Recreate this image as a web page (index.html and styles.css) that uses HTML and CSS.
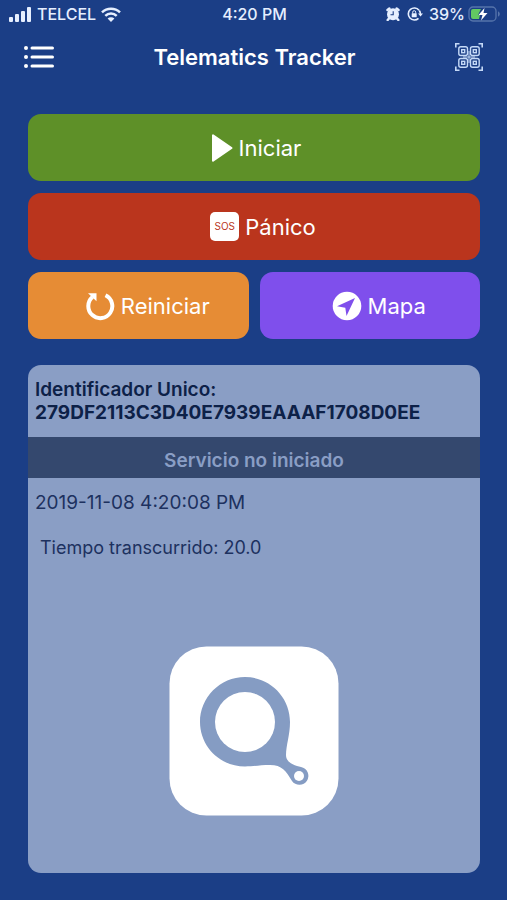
FILE: index.html
```html
<!DOCTYPE html>
<html lang="es">
<head>
<meta charset="utf-8">
<meta name="viewport" content="width=device-width, initial-scale=1">
<title>Telematics Tracker</title>
<link rel="stylesheet" href="styles.css">
</head>
<body>
<div class="status-bar">
  <div class="status-group">
    <svg viewBox="0 0 24 16" width="24" height="16" fill="currentColor" aria-hidden="true">
      <rect x="1" y="11" width="4" height="5" rx="1"/><rect x="7" y="8" width="4" height="8" rx="1"/><rect x="13" y="5" width="4" height="11" rx="1"/><rect x="19" y="1" width="4" height="15" rx="1"/>
    </svg>
    <span>TELCEL</span>
    <svg viewBox="0 0 20 15" width="20" height="15" aria-hidden="true">
      <path d="M1 5.4a13 13 0 0 1 18 0M4.300 8.800a8.200 8.200 0 0 1 11.400 0" fill="none" stroke="currentColor" stroke-width="2.500"/>
      <path d="M10 15 6.600 11.600a4.800 4.800 0 0 1 6.800 0z" fill="currentColor"/>
    </svg>
  </div>
  <span class="clock">4:20 PM</span>
  <div class="status-group status-right">
    <svg viewBox="0 0 14 14" width="14" height="14" aria-hidden="true">
      <circle cx="7" cy="7.300" r="6" fill="currentColor"/>
      <path d="M1.500 3 3.400 1.500M12.500 3 10.600 1.500M3 11.500 1.700 13M11 11.500l1.300 1.500" stroke="currentColor" stroke-width="2.500" stroke-linecap="round"/>
      <path d="M7.200 4.300v3.500H4.500" fill="none" stroke="#1b3e86" stroke-width="1.100"/>
    </svg>
    <svg class="lock" viewBox="0 0 16 14" width="16" height="14" aria-hidden="true">
      <path d="M12 3.200A6 6 0 1 0 11.500 11.300M12.300 3.500A6 6 0 0 1 13.400 7" fill="none" stroke="currentColor" stroke-width="1.600"/>
      <path d="M11 6.500h5l-2.500 3z" fill="currentColor"/>
      <rect x="4.700" y="6.300" width="5" height="4" rx=".5" fill="currentColor"/>
      <path d="M5.700 6.500V5.200a1.500 1.500 0 0 1 3 0v1.300" fill="none" stroke="currentColor"/>
    </svg>
    <span>39%</span>
    <svg class="battery" viewBox="0 0 33 16" width="33" height="16" aria-hidden="true">
      <rect x="1" y="1" width="27" height="14" rx="4" fill="none" stroke="#5674ab" stroke-width="1.300"/>
      <path d="M30 5.500c2.400.6 2.400 4.400 0 5z" fill="#5674ab"/>
      <path d="M5 3h8l-3 6h2l-1 4H5a2 2 0 0 1-2-2V5a2 2 0 0 1 2-2z" fill="#62c962"/>
      <path d="M16.500 2 10.500 9h4l-1.500 5.500 6.500-7.500h-4z" fill="#fff"/>
    </svg>
  </div>
</div>

<header class="nav">
  <button class="icon-button" type="button" aria-label="Menú">
    <svg viewBox="0 0 30 24" width="30" height="24" aria-hidden="true">
      <g fill="currentColor"><circle cx="2" cy="3" r="2"/><circle cx="2" cy="12" r="2"/><circle cx="2" cy="21" r="2"/></g>
      <path d="M8 3h20.500M8 12h20.500M8 21h20.500" stroke="currentColor" stroke-width="3" stroke-linecap="round"/>
    </svg>
  </button>
  <h1>Telematics Tracker</h1>
  <button class="icon-button" type="button" aria-label="Código QR">
    <svg viewBox="0 0 28 28" width="28" height="28" fill="none" stroke="#c5d9f7" aria-hidden="true">
      <path d="M.8 4.500V.8H4.500M23.500 .8h3.700V4.500M27.200 23.500v3.700H23.500M4.500 27.200H.8V23.500" stroke-width="1.600"/>
      <g stroke-width="1.400">
        <rect x="3.800" y="3.800" width="8.700" height="8.700" rx="2"/><rect x="15.500" y="3.800" width="8.700" height="8.700" rx="2"/>
        <rect x="3.800" y="15.500" width="8.700" height="8.700" rx="2"/><rect x="15.500" y="15.500" width="8.700" height="8.700" rx="2"/>
        <rect x="6.700" y="6.700" width="3" height="3"/><rect x="18.300" y="6.700" width="3" height="3"/>
        <rect x="6.700" y="18.300" width="3" height="3"/><rect x="18.300" y="18.300" width="3" height="3"/>
        <path d="M14 8v12M8 14h12" stroke-width="1"/>
      </g>
    </svg>
  </button>
</header>

<main>
  <div class="actions">
    <button class="action start" type="button">
      <svg viewBox="0 0 22 30" width="22" height="30" aria-hidden="true"><path d="M2 2.200v25.600L20.500 15z" fill="currentColor" stroke="currentColor" stroke-width="2" stroke-linejoin="round"/></svg>
      <span>Iniciar</span>
    </button>
    <button class="action panic" type="button">
      <span class="sos">SOS</span>
      <span>Pánico</span>
    </button>
    <button class="action restart" type="button">
      <svg viewBox="0 0 30 30" width="30" height="30" aria-hidden="true">
        <path d="M20.500 4.300A12 12 0 1 1 7.500 6" fill="none" stroke="currentColor" stroke-width="4"/>
        <path d="M3 2.300h8.500v8z" fill="currentColor"/>
      </svg>
      <span>Reiniciar</span>
    </button>
    <button class="action map" type="button">
      <svg viewBox="0 0 30 30" width="30" height="30" aria-hidden="true">
        <circle cx="15" cy="15" r="14.300" fill="currentColor"/>
        <path d="M23 7 5 15.200l8.300 1.500L14.500 25z" fill="#7f4fec"/>
      </svg>
      <span>Mapa</span>
    </button>
  </div>

  <section class="card">
    <div class="identifier">
      <h2>Identificador Unico:</h2>
      <p>279DF2113C3D40E7939EAAAF1708D0EE</p>
    </div>
    <p class="service">Servicio no iniciado</p>
    <p class="date">2019-11-08 4:20:08 PM</p>
    <p class="elapsed">Tiempo transcurrido: 20.0</p>
    <svg class="logo" viewBox="0 0 170 170" width="170" height="170" aria-hidden="true">
      <rect x=".5" y=".5" width="169" height="169" rx="37" fill="#fff"/>
      <path d="M76 31c25 0 45 20 45 45 0 13-4 23-4 33 0 6 5 9 11 11l4 1a9 9 0 1 1-9 14c-6-10-10-16-22-16-10 0-16 1.500-25 1.500-25 0-45-20-45-44.500s20-45 45-45z" fill="#859cc3"/>
      <circle cx="76" cy="76" r="30" fill="#fff"/>
      <circle cx="130" cy="130" r="5" fill="#fff"/>
    </svg>
  </section>
</main>
</body>
</html>
```
FILE: styles.css
```css
* {
  box-sizing: border-box;
}

body {
  margin: 0;
  min-height: 100vh;
  display: flex;
  flex-direction: column;
  background: #1b3e86;
  color: #fff;
  font-family: Inter, "Liberation Sans", sans-serif;
}

h1,
h2,
p {
  margin: 0;
}

button {
  border: 0;
  padding: 0;
  background: none;
  color: inherit;
  font: inherit;
}

svg {
  display: block;
  flex: none;
}

.status-bar {
  display: grid;
  grid-template-columns: 1fr auto 1fr;
  align-items: center;
  height: 28px;
  padding: 0 6px 0 8px;
  color: #e6efff;
  font-size: 16px;
  font-weight: 500;
}

.status-group {
  display: flex;
  align-items: center;
  gap: 5px;
}

.status-right {
  justify-content: flex-end;
}

.lock {
  margin: 0 1px 0 2px;
}

.battery {
  margin-left: -2px;
}

.nav {
  display: flex;
  align-items: center;
  justify-content: space-between;
  height: 58px;
  padding: 0 24px;
}

.nav h1 {
  font-size: 22px;
  font-weight: 600;
}

main {
  flex: 1;
  display: flex;
  flex-direction: column;
  gap: 26px;
  padding: 28px 27px 27px 28px;
}

.actions {
  display: grid;
  grid-template-columns: 1fr 1fr;
  gap: 12px 11px;
}

.action {
  display: flex;
  align-items: center;
  justify-content: center;
  gap: 6px;
  height: 67px;
  border-radius: 13px;
  font-size: 22px;
  font-weight: 400;
}

.start {
  grid-column: 1 / -1;
  padding-left: 4px;
  background: #5e9028;
}

.panic {
  grid-column: 1 / -1;
  padding-left: 18px;
  background: #ba351d;
}

.restart,
.map {
  padding-left: 18px;
}

.restart {
  background: #e68c35;
}

.map {
  background: #7f4fec;
}

.sos {
  width: 29px;
  height: 29px;
  border-radius: 5px;
  background: #fff;
  color: #ba351d;
  font-size: 10px;
  line-height: 28px;
  text-align: center;
}

.card {
  flex: 1;
  border-radius: 13px;
  overflow: hidden;
  background: #8a9ec5;
  color: #1d315f;
  font-size: 18px;
  line-height: 23px;
}

.identifier,
.service {
  font-size: 19px;
  font-weight: 600;
}

.identifier {
  padding: 13px 7px;
  color: #0d2148;
}

.identifier h2 {
  font-size: inherit;
  font-weight: inherit;
}

.identifier p {
  font-weight: 700;
}

.service {
  padding: 12px 7px 6px;
  background: #34486e;
  color: #8a9ec5;
  text-align: center;
}

.date {
  padding: 13px 7px 0;
  font-size: 19px;
}

.elapsed {
  padding: 22px 12px 0;
}

.logo {
  margin: 87px auto 57px;
}
```
